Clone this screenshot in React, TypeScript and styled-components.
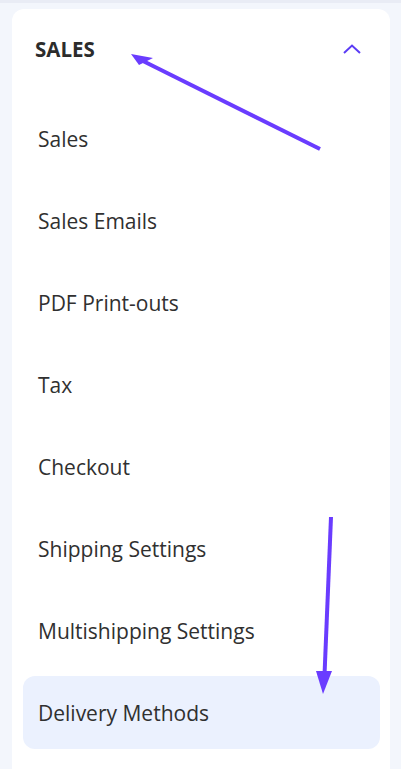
import React from "react";
import styled, { createGlobalStyle } from "styled-components";

const Global = createGlobalStyle`
  html, body { margin: 0; padding: 0; }
  body {
    background: #f3f6fc;
    font-family: "Open Sans", "Noto Sans", sans-serif;
    width: 401px;
    height: 769px;
    overflow: hidden;
  }
`;

const Page = styled.div`
  position: relative;
  width: 401px;
  height: 769px;
  box-sizing: border-box;
  border-top: 3px solid #e9ecf5;
  padding: 6px 11px 0 12px;
  display: flex;
  flex-direction: column;
  overflow: hidden;
`;

const Card = styled.div`
  flex: 1;
  background: #ffffff;
  border-radius: 12px 12px 0 0;
  padding: 0 10px 0 11px;
  box-sizing: border-box;
`;

const Header = styled.div`
  display: flex;
  align-items: center;
  justify-content: space-between;
  height: 80px;
  padding: 0 18px 0 12px;
`;

const Title = styled.h2`
  margin: 0;
  font-size: 20.5px;
  font-weight: 700;
  color: #2c2c2c;
`;

const Toggle = styled.button`
  border: none;
  background: none;
  padding: 0;
  display: flex;
  cursor: pointer;
`;

const List = styled.ul`
  list-style: none;
  margin: 13px 0 0;
  padding: 0;
  display: flex;
  flex-direction: column;
  gap: 9px;
`;

const Item = styled.li<{ $active?: boolean }>`
  height: 73px;
  display: flex;
  align-items: center;
  padding-left: 15px;
  border-radius: 12px;
  font-size: 21px;
  color: #303030;
  background: ${(p) => (p.$active ? "#ebf1fe" : "transparent")};
`;

const Overlay = styled.svg`
  position: absolute;
  left: 0;
  top: 0;
  pointer-events: none;
`;

const items = [
  "Sales",
  "Sales Emails",
  "PDF Print-outs",
  "Tax",
  "Checkout",
  "Shipping Settings",
  "Multishipping Settings",
  "Delivery Methods",
];

export default function App() {
  return (
    <>
      <Global />
      <Page>
        <Card>
          <Header>
            <Title>SALES</Title>
            <Toggle aria-label="Collapse">
              <svg width="20" height="12" viewBox="0 0 20 12">
                <path d="M2 10 L10 2.5 L18 10" fill="none" stroke="#5b3cf5" strokeWidth="2" />
              </svg>
            </Toggle>
          </Header>
          <List>
            {items.map((t) => (
              <Item key={t} $active={t === "Delivery Methods"}>
                {t}
              </Item>
            ))}
          </List>
        </Card>
        <Overlay width="401" height="769" viewBox="0 0 401 769">
          <line x1="320" y1="146" x2="143" y2="58" stroke="#6a3cff" strokeWidth="4" />
          <polygon points="131,51 153,55 139,62" fill="#6a3cff" />
          <line x1="331" y1="514" x2="324.5" y2="672" stroke="#6a3cff" strokeWidth="4" />
          <polygon points="323,691 316,668 332,668" fill="#6a3cff" />
        </Overlay>
      </Page>
    </>
  );
}
